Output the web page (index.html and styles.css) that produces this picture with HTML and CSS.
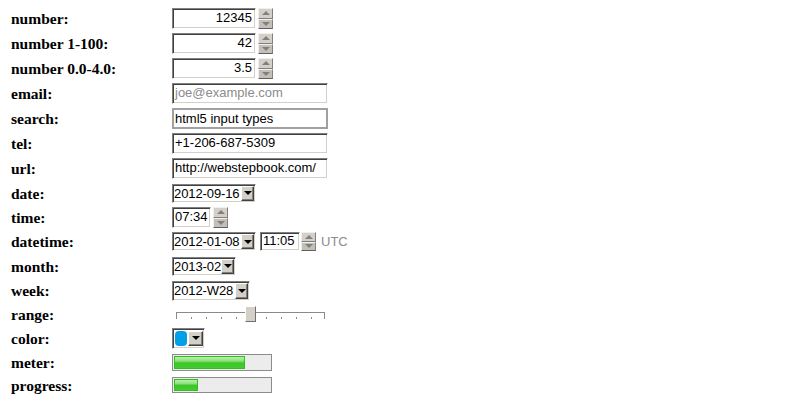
FILE: index.html
```html
<!DOCTYPE html>
<html>
<head>
<meta charset="utf-8">
<link rel="stylesheet" href="styles.css">
</head>
<body>
<div class="form">
  <div class="lbl">number:</div>
  <div class="ctl"><span class="field num w84">12345</span><span class="spin"><span class="sb up"><i class="tri-up"></i></span><span class="sb dn"><i class="tri-dn g"></i></span></span></div>

  <div class="lbl">number 1-100:</div>
  <div class="ctl"><span class="field num w84">42</span><span class="spin"><span class="sb up"><i class="tri-up"></i></span><span class="sb dn"><i class="tri-dn g"></i></span></span></div>

  <div class="lbl">number 0.0-4.0:</div>
  <div class="ctl"><span class="field num w84">3.5</span><span class="spin"><span class="sb up"><i class="tri-up"></i></span><span class="sb dn"><i class="tri-dn g"></i></span></span></div>

  <div class="lbl">email:</div>
  <div class="ctl"><span class="field w156 ph">joe@example.com</span></div>

  <div class="lbl">search:</div>
  <div class="ctl"><span class="field w156 flat">html5 input types</span></div>

  <div class="lbl">tel:</div>
  <div class="ctl"><span class="field w156">+1-206-687-5309</span></div>

  <div class="lbl">url:</div>
  <div class="ctl"><span class="field w156">http://webstepbook.com/</span></div>

  <div class="lbl">date:</div>
  <div class="ctl"><span class="dd w84 h19"><span class="val">2012-09-16</span><span class="btn"><i class="tri-dn"></i></span></span></div>

  <div class="lbl">time:</div>
  <div class="ctl"><span class="field w39">07:34</span><span class="spin"><span class="sb up"><i class="tri-up"></i></span><span class="sb dn"><i class="tri-dn g"></i></span></span></div>

  <div class="lbl">datetime:</div>
  <div class="ctl"><span class="dd w84 h19"><span class="val">2012-01-08</span><span class="btn"><i class="tri-dn"></i></span></span><span class="field w40 h19 gap4">11:05</span><span class="spin s19"><span class="sb up"><i class="tri-up"></i></span><span class="sb dn"><i class="tri-dn g"></i></span></span><span class="utc">UTC</span></div>

  <div class="lbl">month:</div>
  <div class="ctl"><span class="dd w64 h19"><span class="val">2013-02</span><span class="btn"><i class="tri-dn"></i></span></span></div>

  <div class="lbl">week:</div>
  <div class="ctl"><span class="dd w78 h20"><span class="val">2012-W28</span><span class="btn"><i class="tri-dn"></i></span></span></div>

  <div class="lbl">range:</div>
  <div class="ctl">
    <span class="range">
      <svg width="152" height="17" viewBox="0 0 152 17">
        <line x1="1" y1="6.5" x2="150" y2="6.5" stroke="#8a8a8a" stroke-width="1"/>
        <line x1="1.5" y1="6" x2="1.5" y2="13" stroke="#8a8a8a"/>
        <line x1="149.5" y1="6" x2="149.5" y2="13" stroke="#8a8a8a"/>
        <g fill="#8a8a8a">
          <rect x="16" y="11" width="1" height="2"/>
          <rect x="31" y="11" width="1" height="2"/>
          <rect x="46" y="11" width="1" height="2"/>
          <rect x="61" y="11" width="1" height="2"/>
          <rect x="91" y="11" width="1" height="2"/>
          <rect x="106" y="11" width="1" height="2"/>
          <rect x="121" y="11" width="1" height="2"/>
          <rect x="136" y="11" width="1" height="2"/>
        </g>
      </svg>
      <span class="thumb"></span>
    </span>
  </div>

  <div class="lbl">color:</div>
  <div class="ctl"><span class="color"><span class="swatch"></span><span class="btn"><i class="tri-dn"></i></span></span></div>

  <div class="lbl">meter:</div>
  <div class="ctl"><span class="bar h17"><span class="fill" style="width:74%"></span></span></div>

  <div class="lbl">progress:</div>
  <div class="ctl"><span class="bar h16"><span class="fill" style="width:25%"></span></span></div>
</div>
</body>
</html>
```

FILE: styles.css
```css
html, body {
  margin: 0;
  padding: 0;
  background: #ffffff;
}

.form {
  display: grid;
  grid-template-columns: 161px auto;
  grid-template-rows: 25px 25px 25px 25px 25px 25px 25px 24px 25px 23px 26px 23px 25px 22px 27px 18px;
  padding: 6px 0 0 11px;
}

.lbl {
  align-self: center;
  font-family: "Liberation Serif", "Times New Roman", serif;
  font-weight: bold;
  font-size: 15.5px;
  line-height: 17px;
  color: #000;
  white-space: nowrap;
}

.ctl {
  align-self: center;
  display: flex;
  align-items: center;
  font-family: "Liberation Sans", Arial, sans-serif;
  font-size: 13px;
  color: #000;
}

.field {
  box-sizing: border-box;
  height: 21px;
  line-height: 17px;
  padding: 0 2px;
  border: 1px solid;
  border-color: #808080 #ffffff #ffffff #808080;
  box-shadow: inset 1px 1px 0 #404040, inset -1px -1px 0 #d4d0c8;
  background: #fff;
  white-space: nowrap;
  overflow: hidden;
  display: block;
}

.field.flat {
  border: 2px solid #a0a0a0;
  box-shadow: none;
  padding: 0 1px;
  line-height: 17px;
}

.num { text-align: right; padding-right: 3px; }
.ph { color: #8c8c8c; }

.w84 { width: 84px; }
.w156 { width: 156px; }
.w39 { width: 39px; }
.w40 { width: 40px; }
.w64 { width: 64px; }
.w78 { width: 78px; }
.h18 { height: 18px; }
.h19 { height: 19px; }
.h20 { height: 20px; }
.h17 { height: 17px; }
.h16 { height: 16px; }
.gap4 { margin-left: 4px; line-height: 15px; }

.spin {
  display: flex;
  flex-direction: column;
  width: 15px;
  height: 21px;
  margin-left: 2px;
}
.spin.s19 { height: 19px; margin-left: 1px; }

.sb {
  flex: 1;
  box-sizing: border-box;
  background: #d4d0c8;
  border: 1px solid;
  border-color: #f0f0f0 #808080 #808080 #f0f0f0;
  display: flex;
  align-items: center;
  justify-content: center;
}
.sb.dn { background: #c4c0b8; border-bottom-color: #606060; }

i.tri-up, i.tri-dn {
  display: block;
  width: 0;
  height: 0;
  border-left: 4px solid transparent;
  border-right: 4px solid transparent;
}
i.tri-up { border-bottom: 4px solid #808080; }
i.tri-dn { border-top: 4px solid #000; }
i.tri-dn.g { border-top-color: #808080; }

.dd, .color {
  box-sizing: border-box;
  display: flex;
  border: 1px solid;
  border-color: #808080 #ffffff #ffffff #808080;
  box-shadow: inset 1px 1px 0 #404040, inset -1px -1px 0 #d4d0c8;
  background: #fff;
  padding: 1px;
}
.dd .val {
  flex: 1;
  min-width: 0;
  line-height: 15px;
  padding-left: 0;
  white-space: nowrap;
  letter-spacing: -0.1px;
}
.dd .btn, .color .btn {
  box-sizing: border-box;
  flex: none;
  width: 13px;
  background: #d4d0c8;
  border: 1px solid;
  border-color: #ffffff #404040 #404040 #ffffff;
  box-shadow: inset -1px -1px 0 #808080;
  display: flex;
  align-items: center;
  justify-content: center;
}

.utc {
  color: #8c8c8c;
  margin-left: 5px;
}

.range {
  position: relative;
  display: block;
  width: 152px;
  height: 17px;
  margin-left: 3px;
}
.range svg { display: block; }
.thumb {
  position: absolute;
  left: 70px;
  top: 0;
  box-sizing: border-box;
  width: 11px;
  height: 16px;
  background: #d4d0c8;
  border: 1px solid;
  border-color: #ffffff #707070 #707070 #ffffff;
}

.color {
  width: 33px;
  height: 21px;
  padding: 2px 1px 2px 2px;
}
.color .btn { width: 15px; }
.swatch {
  width: 14px;
  background: #00a0e9;
  border-radius: 4px;
  margin-right: 1px;
}

.bar {
  box-sizing: border-box;
  display: block;
  width: 100px;
  border: 1px solid #8c8c8c;
  background: #ececec;
  padding: 1px;
}
.fill {
  display: block;
  box-sizing: border-box;
  height: 100%;
  border: 1px solid #2fbf1f;
  background: linear-gradient(#b6f0a8 0%, #8fe27c 35%, #3fc52a 55%, #46cc30 100%);
}
```
